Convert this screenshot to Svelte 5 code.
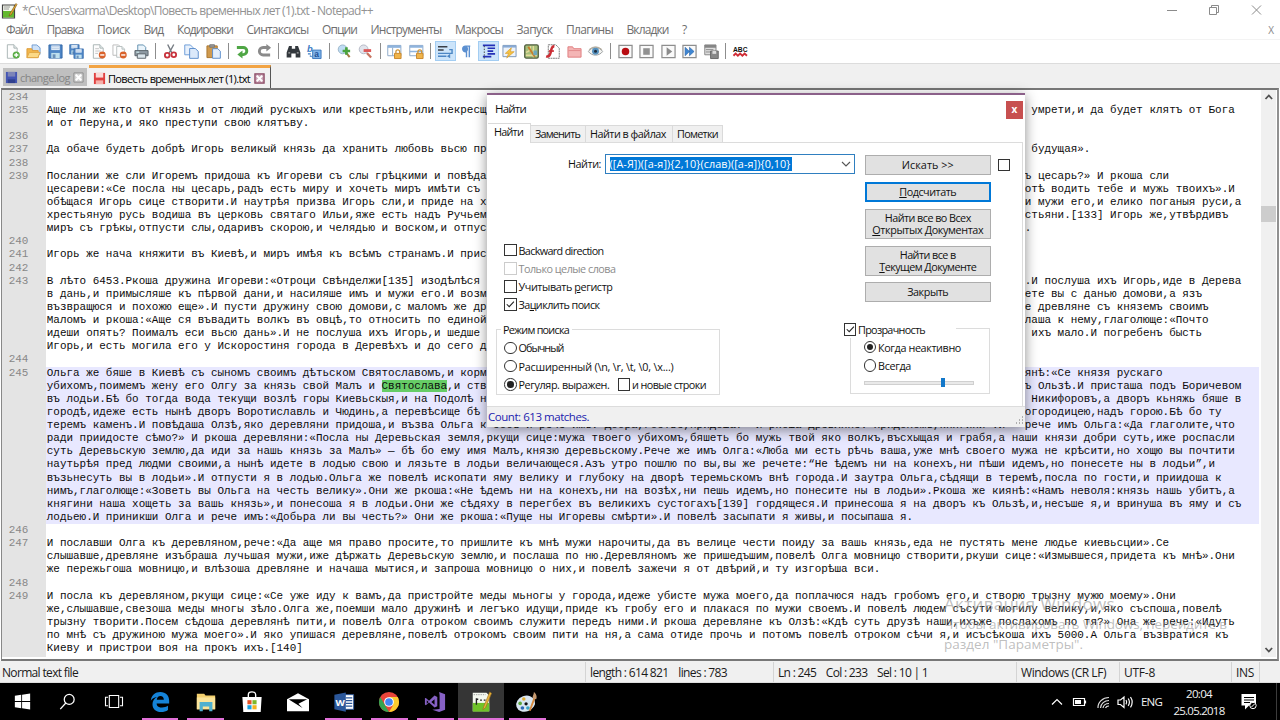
<script>
  // Spreads the letters of a label so that it takes the given width.
  function fit(node, width) {
    const n = [...node.textContent].length;
    const natural = node.getBoundingClientRect().width;
    node.style.letterSpacing = ((width - natural) / n).toFixed(3) + 'px';
  }

  const menu = [
    ['Файл', 27], ['Правка', 37], ['Поиск', 33], ['Вид', 20], ['Кодировки', 56], ['Синтаксисы', 62],
    ['Опции', 35], ['Инструменты', 71], ['Макросы', 48], ['Запуск', 36], ['Плагины', 47], ['Вкладки', 42], ['?', 6]
  ];

  const page = '<path d="M2.5 .8h7l3.5 3.6v10.8H2.5z" fill="#fdfdfd" stroke="#a9b3b3"/><path d="M9.5.8v3.6H13" fill="#e4ecec" stroke="#a9b3b3"/>';
  const minus = '<circle cx="12" cy="11.7" r="3.7" fill="#d9622b"/><path d="M9.8 11.7h4.4" stroke="#fff" stroke-width="1.5"/>';
  const floppy = '<path d="M1 1h14v14H1z" fill="#4f86c6" stroke="#3167a8"/><path d="M3.5 1.5h9v5h-9z" fill="#e9f2fb"/><path d="M3.5 9.5h9V15h-9z" fill="#bfe0ee"/><path d="M4 3h8M4 5h8" stroke="#b7cbe2"/><path d="M5 11h3v4H5z" fill="#6b90b8"/>';
  const lock = '<path d="M8 10h7v5.5H8z" fill="#f0b44a" stroke="#c9862a"/><path d="M9.5 10V8.2a2 2 0 0 1 4 0V10" fill="none" stroke="#cf9436" stroke-width="1.4"/>';
  const frame = (inner) => '<path d="M1 1.5h14v13H1z" fill="#fafafa" stroke="#8e8e8e" stroke-width="1.3"/>' + inner;

  const toolbar = [
    [
      page + '<circle cx="12" cy="11.7" r="3.8" fill="#5cae48"/><path d="M9.8 11.7h4.4M12 9.5v4.4" stroke="#fff" stroke-width="1.4"/>',
      '<path d="M6.5 1h5L15 4v7H6.5z" fill="#cfe2f8" stroke="#6f9bd0"/><path d="M1 5h5l1 2h6v7.5H1z" fill="#f2b64c" stroke="#dc9a36"/><path d="M1 14.5 3.5 9H15l-2.3 5.5z" fill="#fbd987" stroke="#e0a644"/>',
      floppy,
      '<g transform="scale(.72)">' + floppy + '</g><g transform="translate(4.5 4.5) scale(.72)">' + floppy + '</g>',
      page + '<path d="M4.5 5h4M4.5 7.5h6M4.5 10h3" stroke="#c2c2c2"/>' + minus,
      '<path d="M1 1h6l2 2v9H1z" fill="#fff" stroke="#bbb"/><g transform="translate(3 2) scale(.8)">' + page + '</g>' + minus,
      '<path d="M4 7V1h6l2.5 2.5V7" fill="#eaf4fb" stroke="#5f8fae"/><path d="M1 7h14v5.5H1z" fill="#8f9aa3" stroke="#59626a"/><path d="M3.5 10.5h9v4.7h-9z" fill="#dce6ec" stroke="#59626a"/><path d="M2.5 8.7h3" stroke="#dff"/>'
    ],
    [
      '<path d="M5 .5 9.7 10M11.5.5 6.3 10" stroke="#777d84" stroke-width="1.5"/><circle cx="4.5" cy="12" r="2.5" fill="none" stroke="#c8323c" stroke-width="1.9"/><circle cx="11.5" cy="11.5" r="2.5" fill="none" stroke="#c8323c" stroke-width="1.9"/>',
      '<path d="M.8 1h6l3 3v7.5h-9z" fill="#e8f1fc" stroke="#6a9bd8"/><path d="M6 4.8h6l3.2 3v7.5H6z" fill="#dbe9fa" stroke="#5a8ccc"/>',
      '<path d="M1 2h11v12.5H1z" fill="#d09a4e" stroke="#a8742e"/><path d="M4 .8h5v2.6H4z" fill="#999" stroke="#777"/><path d="M7 5h5.5l2.8 2.7v7.5H7z" fill="#e3eefb" stroke="#5a8ccc"/>'
    ],
    [
      '<path d="M2 3.7h6.8a3.7 3.7 0 0 1 0 7.6H7" fill="none" stroke="#4fa645" stroke-width="3.1"/><path d="M8 7v8.5l-5.5-4.2z" fill="#4fa645"/>',
      '<path d="M13 3.7H6.5a3.7 3.7 0 0 0 0 8H14" fill="none" stroke="#8a8a8a" stroke-width="3"/><path d="M10 0v8l5-4z" fill="#8a8a8a"/>'
    ],
    [
      '<path d="M3.2 2h3v3H9.8V2h3l2.5 7v5.5h-5V10H5.7v4.5h-5V9z" fill="#33383d"/><path d="M2.5 9.5h2M11.5 9.5h2" stroke="#aaa" stroke-width="1.4"/>',
      '<text x="0" y="8" font-size="10" font-weight="700" font-style="italic" fill="#3d7cc4" font-family="Liberation Sans">b</text><path d="M6 6.5h9v9H6z" fill="#7db2e8" stroke="#3b76bb"/><text x="7.6" y="14" font-size="9" font-weight="700" fill="#1d4f94" font-family="Liberation Sans">a</text><path d="M1 10.5h3M3 12.5l2 1" stroke="#3d7cc4" stroke-width="1.4"/>'
    ],
    [
      '<circle cx="6" cy="5.7" r="4.7" fill="#bfdcf4" stroke="#9ab4c8"/><path d="m9.5 9 4 5" stroke="#a67c45" stroke-width="2.2"/><path d="M10 3.500v8M6 7.500h8" stroke="#49a33e" stroke-width="2.800"/>',
      '<circle cx="6" cy="5.7" r="4.7" fill="#e1e4ec" stroke="#b3b8c4"/><path d="m9.5 9.5 4.5 5" stroke="#c67460" stroke-width="2.3"/><path d="M6 7h8" stroke="#dc5757" stroke-width="3"/>'
    ],
    [
      '<path d="M.8 1.5h14v11H.8z" fill="#fff" stroke="#8ba6c6"/><path d="M.8 1.5h14v2.6H.8z" fill="#8fb4dd"/><path d="M6 4v8.5" stroke="#8ba6c6"/>' + lock,
      '<path d="M.8 1.5h14v11H.8z" fill="#fff" stroke="#8ba6c6"/><path d="M.8 1.5h14v2.6H.8zM.8 7.2h14v1.5H.8z" fill="#8fb4dd"/>' + lock
    ],
    [
      '<path d="M0 3h10M0 6.5h6" stroke="#3a3f47" stroke-width="1.6"/><path d="M0 10h15V6h-3M0 13h9" stroke="#4c86c4" stroke-width="1.5" fill="none"/><path d="M13 10.5 9.5 13l3.5 2.3z" fill="#4c86c4"/>',
      '<path d="M12 2.3H7a3 3 0 0 0 0 6h1V14M8 2.5V14M11 2.5V14" fill="none" stroke="#5b8fd0" stroke-width="1.5"/><circle cx="6.8" cy="5.3" r="2.8" fill="#5b8fd0"/>',
      '<path d="M2 1.5h13M7 4.5h8M7 7.5h6M7 10.5h8M2 13.5h9" stroke="#2430b8" stroke-width="1.8"/><path d="M3.5 2v14" stroke="#3c3c3c" stroke-dasharray="1.5 1.5"/>',
      '<path d="M1 1.5h14v12H1z" fill="#edf3fb" stroke="#7a94b5"/><path d="M1 1.5h14v2.3H1z" fill="#88a9d4"/><path d="M10 4 3.5 10H7l-2 5 8-6.8H9z" fill="#f5c243" stroke="#d89c2d" stroke-width=".7"/>',
      '<rect x=".8" y="1" width="14.4" height="14" rx="1.5" fill="#a7bf7b" stroke="#4e5c3c" stroke-width="1.4"/><path d="M2 9c4-1 5-5 5-7M2 12h12M10 2v12" stroke="#e5dc9b" stroke-width="1.5" fill="none"/><path d="m4.5 3 7 10.5" stroke="#c77d2b" stroke-width="2"/><path d="M10 7h4v5h-4z" fill="#6ca8bb"/>',
      '<path d="M3.5.8h8l3.7 3.7v10.7H3.5z" fill="#fff" stroke="#777" stroke-dasharray="2 .6"/><path d="M10 2.500C6.500 2.300 7 6 5.800 10c-.9 3-2.300 3.800-4.600 3.200" stroke="#cb2e35" stroke-width="2.600" fill="none"/><path d="M4 7.500h5.500" stroke="#cb2e35" stroke-width="1.800"/>',
      '<path d="M1 3h5l1.2 2H15v9H1z" fill="#f4b5b5" stroke="#df7d7f"/><path d="M1.5 7h13" stroke="#e28a8c"/>',
      '<path d="M.4 8C4 2.5 12 2.5 15.6 8 12 13.2 4 13.2.4 8z" fill="#f1f1ef" stroke="#999d9e"/><circle cx="8" cy="7.8" r="3.7" fill="#5590bd"/><circle cx="8" cy="7.8" r="1.6" fill="#1c2d40"/><path d="M1 6Q8 0 15 6" fill="none" stroke="#aaa18f"/>'
    ],
    [
      frame('<circle cx="8" cy="8" r="4" fill="#b90d12"/>'),
      frame('<path d="M4.5 4.5h7v7h-7z" fill="#919191"/>'),
      frame('<path d="M6 3.5v9l6-4.5z" fill="#8b8b8b"/>'),
      frame('<path d="M3.3 3.5v9L8 8zM8 3.5v9L12.9 8z" fill="#3e86d3" stroke="#285e9e" stroke-width=".6"/>'),
      '<path d="M.8 1h12v10.5h-12z" fill="#ddd" stroke="#858585"/><path d="M.8 1h12v3h-12z" fill="#858585"/><path d="M2 6h8M2 8.5h5" stroke="#888"/><path d="M7 7.5h8.2v8H7z" fill="#888" stroke="#666"/><path d="M9 7.5h4v3H9z" fill="#ddd"/>'
    ],
    [
      '<text x="0" y="8.500" font-size="8" font-weight="700" fill="#111" font-family="Liberation Sans" textLength="15.500" lengthAdjust="spacingAndGlyphs">ABC</text><path d="m.5 12.500 2.300-2.300 2.400 2.300 2.400-2.300 2.400 2.300 2.400-2.300 2.500 2.300" fill="none" stroke="#d02c36" stroke-width="2"/>'
    ]
  ];
  const pressed = ['6-0', '6-2'];

  // Editor rows: [line number, text, text right of the dialog, highlighted]
  const src = [
    ['234', ''],
    ['235', 'Аще ли же кто от князь и от людий рускыхъ или крестьянъ,или некресщ', ' умрети,и да будет клятъ от Бога'],
    ['', 'и от Перуна,и яко преступи свою клятъву.'],
    ['236', ''],
    ['237', 'Да обаче будеть добрѣ Игорь великый князь да хранить любовь вьсю пр', ' будущая».'],
    ['238', ''],
    ['239', 'Послании же сли Игоремъ придоша къ Игореви съ слы грѣцкими и повѣда', 'ъ цесарь?» И ркоша сли'],
    ['', 'цесареви:«Се посла ны цесарь,радъ есть миру и хочеть миръ имѣти съ ', 'отѣ водить тебе и мужь твоихъ».И'],
    ['', 'обѣщася Игорь сице створити.И наутрѣя призва Игорь сли,и приде на х', 'и мужи его,и елико поганыя руси,а'],
    ['', 'хрестьяную русь водиша въ церковь святаго Ильи,яже есть надъ Ручьем', 'стьяни.[133] Игорь же,утвѣрдивъ'],
    ['', 'миръ съ грѣкы,отпусти слы,одаривъ скорою,и челядью и воском,и отпус', '.'],
    ['240', ''],
    ['241', 'Игорь же нача княжити въ Киевѣ,и миръ имѣя къ всѣмъ странамъ.И прис'],
    ['242', ''],
    ['243', 'В лѣто 6453.Ркоша дружина Игореви:«Отроци Свѣнделжи[135] изодѣлѣся ', '.И послуша ихъ Игорь,иде в Дерева'],
    ['', 'в дань,и примысляше къ пѣрвой дани,и насиляше имъ и мужи его.И возм', 'ете вы с данью домови,а язъ'],
    ['', 'възвращюся и похожю еще».И пусти дружину свою домови,с маломъ же др', 'е древляне съ княземъ своимъ'],
    ['', 'Маломъ и ркоша:«Аще ся въвадить волкъ въ овцѣ,то относить по единой', 'лаша к нему,глаголюще:«Почто'],
    ['', 'идеши опять? Поималъ еси вьсю дань».И не послуша ихъ Игорь,и шедше ', ' ихъ мало.И погребенъ бысть'],
    ['', 'Игорь,и есть могила его у Искоростиня города в Деревѣхъ и до сего д'],
    ['244', ''],
    ['245', 'Ольга же бяше в Киевѣ съ сыномъ своимъ дѣтьском Святославомъ,и корм', 'янѣ:«Се князя рускаго', 1],
    ['', 'убихомъ,поимемъ жену его Олгу за князь свой Малъ и Святослава,и ств', 'ъ Ользѣ.И присташа подъ Боричевом', 1],
    ['', 'въ лодьи.Бѣ бо тогда вода текущи возлѣ горы Киевьскыя,и на Подолѣ н', ' Никифоровъ,а дворъ кьняжь бяше в', 1],
    ['', 'городѣ,идеже есть нынѣ дворъ Воротиславль и Чюдинь,а перевѣсище бѣ ', 'огородицею,надъ горою.Бѣ бо ту', 1],
    ['', 'теремъ каменъ.И повѣдаша Олзѣ,яко деревляни придоша,и възва Ольга к собѣ и рече имъ:«Добра,гостье,придоша?» И ркоша древляне:«Придохомъ,княгини».И', 'рече имъ Ольга:«Да глаголите,что', 1],
    ['', 'ради приидосте сѣмо?» И ркоша деревляни:«Посла ны Деревьская земля,ркущи сице:мужа твоего убихомъ,бяшеть бо мужь твой яко волкъ,въсхыщая и грабя,а наши князи добри суть,иже роспасли', '', 1],
    ['', 'суть Деревьскую землю,да иди за нашь князь за Малъ» — бѣ бо ему имя Малъ,князю деревьскому.Рече же имъ Олга:«Люба ми есть рѣчь ваша,уже мнѣ своего мужа не крѣсити,но хощю вы почтити', '', 1],
    ['', 'наутьрѣя пред людми своими,а нынѣ идете в лодью свою и лязьте в лодьи величающеся.Азъ утро пошлю по вы,вы же речете:“Не ѣдемъ ни на конехъ,ни пѣши идемъ,но понесете ны в лодьи”,и', '', 1],
    ['', 'възьнесуть вы в лодьи».И отпусти я в лодью.Ольга же повелѣ ископати яму велику и глубоку на дворѣ теремьскомъ внѣ города.И заутра Ольга,сѣдящи в теремѣ,посла по гости,и приидоша к', '', 1],
    ['', 'нимъ,глаголюще:«Зоветь вы Ольга на честь велику».Они же ркоша:«Не ѣдемъ ни на конехъ,ни на возѣх,ни пешь идемъ,но понесите ны в лодьи».Ркоша же киянѣ:«Намъ неволя:князь нашь убитъ,а', '', 1],
    ['', 'княгини наша хощеть за вашь князь»,и понесоша я в лодьи.Они же сѣдяху в перегбех въ великихъ сустогахъ[139] гордящеся.И принесоша я на дворъ къ Ользѣ,и,несъше я,и вринуша въ яму и съ', '', 1],
    ['', 'лодьею.И приникши Олга и рече имъ:«Добьра ли вы честь?» Они же ркоша:«Пуще ны Игоревы смѣрти».И повелѣ засыпати я живы,и посыпаша я.', '', 1],
    ['246', ''],
    ['247', 'И пославши Олга къ деревляном,рече:«Да аще мя право просите,то пришлите къ мнѣ мужи нарочиты,да въ велице чести поиду за вашь князь,еда не пустять мене людье киевьсции».Се'],
    ['', 'слышавше,древляне изъбраша лучьшая мужи,иже дѣржать Деревьскую землю,и послаша по ню.Деревляномъ же пришедъшим,повелѣ Олга мовницю створити,ркуши сице:«Измывшеся,придета къ мнѣ».Они'],
    ['', 'же пережьгоша мовницю,и влѣзоша древляне и начаша мытися,и запроша мовницю о них,и повелѣ зажечи я от двѣрий,и ту изгорѣша вси.'],
    ['248', ''],
    ['249', 'И посла къ деревляном,ркущи сице:«Се уже иду к вамъ,да пристройте меды мьногы у города,идеже убисте мужа моего,да поплачюся надъ гробомъ его,и створю трызну мужю моему».Они'],
    ['', 'же,слышавше,свезоша меды многы зѣло.Олга же,поемши мало дружинѣ и легъко идущи,приде къ гробу его и плакася по мужи своемъ.И повелѣ людем съсути могилу велику,и,яко съспоша,повелѣ'],
    ['', 'трызну творити.Посем сѣдоша деревлянѣ пити,и повелѣ Олга отроком своимъ служити передъ ними.И ркоша деревляне къ Олзѣ:«Кдѣ суть друзѣ наши,ихъже послахомъ по тя?» Она же рече:«Идуть'],
    ['', 'по мнѣ съ дружиною мужа моего».И яко упишася деревляне,повелѣ отрокомъ своим пити на ня,а сама отиде прочь и потомъ повелѣ отроком сѣчи я,и исъсѣкоша ихъ 5000.А Ольга възвратися къ'],
    ['', 'Киеву и пристрои воя на прокъ ихъ.[140]']
  ];
  const MATCH = 'Святослава,';
  const rows = src.map(([num, left, right, current]) => {
    const at = left.indexOf(MATCH);
    const end = at + MATCH.length - 1;
    return { num, current, right, parts: at < 0 ? [left, '', ''] : [left.slice(0, at), left.slice(at, end), left.slice(end)] };
  });

  const regex = '([А-Я])([а-я]){2,10}(слав)([а-я]){0,10}';

  const apps = [
    ['edge', true, '<path d="M2 10.5C2.5 4.5 7 1 12.3 1 18.5 1 22 5 22 10.5v3H8.3c.2 3.3 3 4.5 6 4.5 2.400 0 4.500-.6 6.400-1.800v4.600C18.600 22.300 16 23 13.200 23 7.500 23 3.800 19.700 3.800 14.500c0-3.700 1.900-6.400 4.900-8C5.500 6.800 3.300 8.300 2 10.500zM8.500 9.600h7.700c0-2.600-1.400-4.100-3.700-4.100S8.700 7.300 8.500 9.600z" fill="#1583d8"/>'],
    ['files', true, '<path d="M2 3h8l1.500 2H22v15H2z" fill="#f3cf6d"/><path d="M2 7h20v13H2z" fill="#fbe49a"/><path d="M5 12h14v10h-3.500v-5h-7v5H5z" fill="#4fb0cf"/>'],
    ['store', false, '<path d="M1.500 6.500h21L21.500 23h-19z" fill="#fff"/><path d="M8 7V4a4 3 0 0 1 8 0v3" fill="none" stroke="#fff" stroke-width="1.500"/><path d="M7 10h4.500v4.500H7z" fill="#e65124"/><path d="M12.500 10H17v4.500h-4.500z" fill="#7db829"/><path d="M7 15.500h4.500V20H7z" fill="#18a0e0"/><path d="M12.500 15.500H17V20h-4.500z" fill="#f4b31d"/>'],
    ['mail', false, '<path d="m0 9 12-6.500L24 9v13H0z" fill="#fff"/><path d="M2.500 9h19.500L12.500 14l4.500 4.500L2.500 9.500z" fill="#000"/>'],
    ['word', true, '<path d="M12 4h10.500v16H12z" fill="#fff" stroke="#2b579a"/><path d="M14 7.500h7M14 10.500h7M14 13.500h7M14 16.500h7" stroke="#2b579a" stroke-width="1.200"/><path d="M1.500 4 14 1.500v21L1.500 20z" fill="#2b579a"/><text x="2.800" y="16" font-family="Open Sans" font-weight="700" font-size="10.500" fill="#fff">W</text>'],
    ['chrome', true, '<circle cx="12" cy="12" r="11" fill="#e8443a"/><path d="M2.500 6.500 8 16l4 7A11 11 0 0 1 2.500 6.500z" fill="#33a350"/><path d="M21.500 6.500H12l4.500 9L12 23A11 11 0 0 0 21.500 6.500z" fill="#fccb2e"/><circle cx="12" cy="12" r="5.300" fill="#fff"/><circle cx="12" cy="12" r="4.200" fill="#4285f4"/>'],
    ['vs', true, '<path d="M16.500 1 23 3.500v17L16.500 23 9 20.500l8-1V4.500z" fill="#8661c5"/><path d="m2 7.500 3.500 3 6-5.500 3 1.500v10l-3 1.500-6-5.500-3.500 3-1-.7V8zM11.500 9l-3.500 3 3.500 3zM3 10v4l2-2z" fill="#8661c5" fill-rule="evenodd"/>'],
    ['npp', true, '<path d="M3 2h15l3 3v17H3z" fill="#f4f8ef"/><path d="M3 13h18v9.500H3z" fill="#6fc329"/><path d="M4 4h13" stroke="#999" stroke-dasharray="1.500 1"/><path d="M7 8v7M7 9h2M11 10h2M15 10h2" stroke="#222" stroke-width="1.500"/><path d="M21.500 1 15 17l-1 3.500L17 18 23.500 2.500z" fill="#e9b33b" stroke="#9a6d1d" stroke-width=".7"/>', true],
    ['paint', true, '<ellipse cx="10.500" cy="14" rx="10.500" ry="8.500" transform="rotate(-20 10 14)" fill="#d8e6f2"/><circle cx="4.500" cy="13.500" r="2" fill="#5ba53c"/><circle cx="8.500" cy="8.800" r="1.900" fill="#e2ae35"/><circle cx="7" cy="18.500" r="2" fill="#2d67b5"/><circle cx="13" cy="18.500" r="2" fill="#3ba7c9"/><circle cx="11" cy="14" r="1.800" fill="#111"/><path d="M20 8 15 21.500" stroke="#d98a3d" stroke-width="2"/><path d="M18.500 8.500c-1-3 1-4 1-7.500 2 1.500 4 4.500 2.500 8z" fill="#c69a70"/>']
  ];
</script>

{#snippet svg(body, cls, vb = '0 0 16 16')}
  <svg class={cls} viewBox={vb}>{@html body}</svg>
{/snippet}
{#snippet check(on, off)}
  <span class="box" class:off>{#if on}<svg viewBox="0 0 12 12"><path d="m2 6 2.800 2.800L10.200 3" fill="none" stroke="#222" stroke-width="1.200" /></svg>{/if}</span>
{/snippet}
{#snippet radio(on)}
  <span class="radio">{#if on}<i></i>{/if}</span>
{/snippet}

<div class="screen">
  <header class="title">
    <svg class="logo" viewBox="0 0 16 16"><path d="M1.500 2h12v13h-12z" fill="#f5f9ed" stroke="#444" stroke-width="1.200" /><path d="M2 8h11v6.500H2z" fill="#64b92f" /><path d="M3 4h6M3 6h5" stroke="#999" /><path d="M15 .5 9 10.500l-1 2.500 2.500-1.500L16 1.500z" fill="#e9ad2e" stroke="#76511b" stroke-width=".6" /></svg>
    <span class="caption" use:fit={351}>*C:\Users\xarma\Desktop\Повесть временных лет (1).txt - Notepad++</span>
    <svg class="winbtns" viewBox="0 0 110 20"><path d="M6 9.500h10M48.500 6.500h7v7h-7zM50.500 6V4.500h7v7H56M91 4.500l9 9M100 4.500l-9 9" fill="none" stroke="#8b8b8b" /></svg>
  </header>
  <nav class="menu">
    {#each menu as [name, w]}<span style="width:{w}px"><b use:fit={w}>{name}</b></span>{/each}
    <em>X</em>
  </nav>
  <div class="toolbar">
    {#each toolbar as group, g}
      {#if g}<i class="sep"></i>{/if}
      {#each group as icon, n}
        <span class="tool" class:pressed={pressed.includes(g + '-' + n)}>{@render svg(icon, 'ico')}</span>
      {/each}
    {/each}
  </div>
  <div class="tabs">
    <div class="tab idle">
      <svg viewBox="0 0 14 14"><path d="M1 1h12v12H1z" fill="#4455b4" /><path d="M3 1h8v5H3z" fill="#7c84b8" /><path d="M3 9h8v4H3z" fill="#30408e" /></svg>
      <span use:fit={50}>change.log</span>
      <svg class="x" viewBox="0 0 12 12"><path d="M1 1h10v10H1z" fill="#d5d5d5" stroke="#8b8b8b" /><path d="m3 3 6 6M9 3 3 9" stroke="#fff" stroke-width="2" /></svg>
    </div>
    <div class="tab active">
      <svg viewBox="0 0 14 14"><path d="M1 1h12v12H1z" fill="#e0403f" /><path d="M3 1h8v5H3z" fill="#fbd9d6" /><path d="M3 9h8v4H3z" fill="#f4b0aa" /></svg>
      <span use:fit={142}>Повесть временных лет (1).txt</span>
      <svg class="x" viewBox="0 0 12 12"><path d="M1 1h10v10H1z" fill="#c9a3b4" stroke="#8b4863" stroke-width="1.400" /><path d="m3 3 6 6M9 3 3 9" stroke="#fff" stroke-width="2" /></svg>
    </div>
  </div>

  <main class="editor">
    <div class="rows">
      {#each rows as row}
        <div class="row">
          <span class="num">{row.num}</span>
          <div class="code" class:current={row.current}><span class="run" class:short={row.right}>{row.parts[0]}<mark>{row.parts[1]}</mark>{row.parts[2]}</span>{#if row.right}<span>{row.right}</span>{/if}</div>
        </div>
      {/each}
    </div>
    <div class="scroll">
      <svg viewBox="0 0 15 15"><path d="m4.500 9 3.300-3.500L11.100 9" fill="none" stroke="#505050" stroke-width="1.800" /></svg>
      <i></i>
      <svg viewBox="0 0 15 15"><path d="m4.500 6 3.300 3.500L11.100 6" fill="none" stroke="#505050" stroke-width="1.800" /></svg>
    </div>
  </main>

  <footer class="status">
    <span style="width:584px"><b use:fit={76}>Normal text file</b></span>
    <span style="width:188px"><b use:fit={137}>length : 614 821 &nbsp;&nbsp; lines : 783</b></span>
    <span style="width:243px"><b use:fit={150}>Ln : 245 &nbsp;&nbsp; Col : 233 &nbsp;&nbsp; Sel : 10 | 1</b></span>
    <span style="width:103px"><b use:fit={85}>Windows (CR LF)</b></span>
    <span style="width:112px"><b use:fit={31}>UTF-8</b></span>
    <span style="width:28px"><b use:fit={18}>INS</b></span>
  </footer>

  <div class="taskbar">
    <div class="sys">{@render svg('<path d="M1 3.300 8.500 2.200v7.300H1zM9.500 2 19 .7v8.800H9.500zM1 10.500h7.500v7.300L1 16.700zM9.500 10.500H19v8.800L9.500 18z" fill="#fff"/>', 'i16', '0 0 20 20')}</div>
    <div class="sys">{@render svg('<circle cx="12" cy="7.500" r="5.800" fill="none" stroke="#fff" stroke-width="1.500"/><path d="M8 11.800 1.500 19" stroke="#fff" stroke-width="1.500"/>', 'i17', '0 0 20 20')}</div>
    <div class="sys">{@render svg('<path d="M5.500 3h11v14h-11zM4 5H1v10h3M18 5h3v10h-3" fill="none" stroke="#fff" stroke-width="1.300"/>', 'i20', '0 0 22 20')}</div>
    {#each apps as [name, open, icon, active]}
      <div class="app {name}" class:open class:front={active}>{@render svg(icon, 'appico', '0 0 24 24')}</div>
    {/each}
    <div class="tray">
      <svg class="glyphs" viewBox="0 0 84 20"><g fill="none" stroke="#fff" stroke-width="1.200"><path d="m1 12.500 5-5 5 5" /><path d="M22.500 6.500h11v7h-11zM34.500 8.500v3" /><path d="M47 16a11 10 0 0 1 11-10.500M49.500 16a8.500 8 0 0 1 8.500-7.500M52 16a6 5 0 0 1 6-4.500M54.500 16a3.500 3 0 0 1 3.500-2" stroke="#ddd" /><path d="M67 8h2.500L73 5v10.500L69.500 12.500H67zM75 8q1.500 2.200 0 4.400M77.200 6.500q2.500 3.700 0 7.400M79.500 5q3.400 5.200 0 10.400" /></g><path d="M24 8h6v4h-6z" fill="#fff" /></svg>
      <span class="lang"><b use:fit={21}>ENG</b></span>
      <div class="clock"><b use:fit={26}>20:04</b><b use:fit={51}>25.05.2018</b></div>
      <svg class="note" viewBox="0 0 18 20"><path d="M1.500 2h14.500v11.500h-7L5 17.500v-4H1.500z" fill="#fff" /><path d="M4 5.500h10M4 8h10M4 10.500h6" stroke="#000" stroke-width="1.200" /><circle cx="13" cy="13.500" r="3.200" fill="#000" stroke="#fff" /><path d="m11.500 15 3-3" stroke="#fff" /></svg>
      <i class="peek"></i>
    </div>
  </div>

  <div class="mark">
    <p class="big"><span use:fit={171}>Активация Windows</span></p>
    <p><span use:fit={283}>Чтобы активировать Windows, перейдите в</span></p>
    <p><span use:fit={139}>раздел "Параметры".</span></p>
  </div>

  <section class="dialog">
    <div class="dtitle"><span use:fit={31}>Найти</span><i class="close">x</i></div>
    <div class="dtabs">
      <span class="on" style="width:43px"><b use:fit={29}>Найти</b></span>
      <span style="width:55px"><b use:fit={45}>Заменить</b></span>
      <span style="width:87px"><b use:fit={76}>Найти в файлах</b></span>
      <span style="width:50px"><b use:fit={41}>Пометки</b></span>
    </div>
    <div class="body">
      <div class="left">
        <div class="find">
          <label><b use:fit={33}>Найти:</b></label>
          <div class="combo"><span class="sel"><b use:fit={181}>{regex}</b></span><svg viewBox="0 0 10 10"><path d="m1 3 4 4 4-4" fill="none" stroke="#555" stroke-width="1.100" /></svg></div>
        </div>
        <div class="opts">
          <div>{@render check(false, false)}<b use:fit={85}>Backward direction</b></div>
          <div class="dim">{@render check(false, true)}<b use:fit={97}>Только целые слова</b></div>
          <div>{@render check(false, false)}<b use:fit={94}>Учитывать <u>р</u>егистр</b></div>
          <div>{@render check(true, false)}<b use:fit={81}>За<u>ц</u>иклить поиск</b></div>
        </div>
        <div class="group mode">
          <span class="legend"><b use:fit={66}>Режим поиска</b></span>
          <div>{@render radio(false)}<b use:fit={45}>Обычный</b></div>
          <div>{@render radio(false)}<b use:fit={155}>Расширенный (\n, \r, \t, \0, \x...)</b></div>
          <div>{@render radio(true)}<b use:fit={91}>Регуляр. выражен.</b><span class="nl">{@render check(false, false)}<b use:fit={74}>и новые строки</b></span></div>
        </div>
      </div>
      <div class="right">
        <div class="btnrow"><button><b use:fit={52}>Искать &gt;&gt;</b></button>{@render check(false, false)}</div>
        <button class="default"><b use:fit={57}><u>П</u>одсчитать</b></button>
        <button class="tall"><b use:fit={86}>Найти все во Всех</b><b use:fit={111}><u>О</u>ткрытых Документах</b></button>
        <button class="tall"><b use:fit={56}>Найти все в</b><b use:fit={97}><u>Т</u>екущем Документе</b></button>
        <button><b use:fit={41}>Закрыть</b></button>
        <div class="group alpha">
          <span class="legend">{@render check(true, false)}<b use:fit={67}>Прозрачность</b></span>
          <div>{@render radio(true)}<b use:fit={83}>Когда неактивно</b></div>
          <div>{@render radio(false)}<b use:fit={33}>Всегда</b></div>
          <div class="slider"><i></i></div>
        </div>
      </div>
    </div>
    <div class="dstatus"><b use:fit={101}>Count: 613 matches.</b><svg viewBox="0 0 9 9"><path d="M7 1h1M7 4h1M4 4h1M7 7h1M4 7h1M1 7h1" stroke="#999" stroke-width="1.300" /></svg></div>
  </section>
</div>

<style>
  :global(body) { margin: 0; overflow: hidden; background: #000; }
  .screen { position: relative; width: 1280px; height: 720px; overflow: hidden; display: flex; flex-direction: column; background: #fff; font-family: "Open Sans", "Noto Sans", sans-serif; font-size: 12px; color: #1a1a1a; }
  .screen * { box-sizing: border-box; }
  b { font-weight: 400; white-space: nowrap; display: inline-block; }
  svg { display: block; flex: none; overflow: visible; }
  u { text-decoration: underline; text-underline-offset: 1px; }

  .title { height: 21px; display: flex; align-items: center; padding-left: 1px; }
  .logo { width: 16px; height: 16px; margin-right: 5px; }
  .caption { color: #929292; white-space: nowrap; line-height: 20px; }
  .winbtns { width: 110px; height: 20px; margin-left: auto; margin-right: 9px; }
  .menu { height: 18px; display: flex; align-items: center; gap: 13.500px; padding: 0 6px; color: #6e6e6e; line-height: 18px; }
  .menu em { margin-left: auto; font-style: normal; font-size: 10px; color: #888; }
  .toolbar { height: 24px; display: flex; align-items: center; padding: 0 0 1px 1.500px; background: #fff; border-top: 1px solid #f3f3f3; }
  .tool { width: 21.500px; height: 20px; display: grid; place-items: center; flex: none; }
  .tool.pressed { background: #cce4fa; box-shadow: inset 0 0 0 1px #a3cdf2; }
  .ico { width: 15px; height: 15px; }
  .sep { width: 1px; height: 16px; margin: 0 3.350px; background: #8d8d8d; }
  .tabs { height: 25px; display: flex; align-items: flex-end; padding-left: 3px; background: #f0f0f0; border-top: 1px solid #dcdcdc; font-size: 11px; }
  .tab { display: flex; align-items: center; white-space: nowrap; }
  .tab svg { width: 13px; height: 13px; }
  .tab .x { width: 11px; height: 11px; margin-left: auto; }
  .idle { width: 84px; height: 18px; margin-bottom: 2px; background: #bfbfbf; color: #858585; padding: 0 3px 0 2px; }
  .idle span { margin-left: 2px; }
  .active { width: 182px; height: 23px; margin-left: 2px; background: #f2f2f2; border-top: 3.500px solid #f2a444; border-right: 1.500px solid #555; color: #000; padding: 0 5px 0 4px; }
  .active span { margin-left: 2px; }

  .editor { height: 573px; display: flex; border: 1px solid #888; border-top: 2px solid #777; border-bottom: 2px solid #777; border-right: 2px solid #909090; margin: 0 1px; background: #fff; }
  .rows { width: 1259px; height: 567px; overflow: hidden; font-family: "Liberation Mono", monospace; font-size: 10.945px; line-height: 13.130px; background: linear-gradient(90deg, #e4e4e4 44px, #fff 44px); padding-top: .9px; }
  .row { display: flex; height: 13.130px; padding-right: 2px; }
  .num { width: 44px; padding-left: 6.700px; color: #888; flex: none; }
  .code { white-space: pre; flex: 1; height: 13.130px; color: #0c0c0c; padding-left: .8px; display: flex; }
  .run { flex: none; }
  .short { width: 149ch; padding-right: 80ch; }
  .short:has(mark:empty) { padding-right: 0; }
  .short { padding-right: 0; }
  .current { background: #e8e8ff; }
  mark { background: #66cc66; color: inherit; }
  .scroll { width: 15px; height: 567px; background: #f0f0f0; display: flex; flex-direction: column; }
  .scroll svg { width: 15px; height: 15px; }
  .scroll i { height: 16px; margin-top: 101px; margin-bottom: auto; background: #cdcdcd; }

  .status { height: 22px; display: flex; align-items: center; background: #f0f0f0; padding-left: 2px; border-bottom: 1px solid #ddd; font-size: 12px; }
  .status span { border-right: 1px solid #d4d4d4; height: 20px; line-height: 21px; flex: none; }
  .status span + span { padding-left: 4px; }

  .taskbar { height: 37px; background: #000; display: flex; align-items: center; color: #f2f2f2; }
  .sys { width: 45px; display: grid; place-items: center; flex: none; }
  .sys:nth-child(3) { width: 47px; }
  .i16 { width: 17px; height: 17px; }
  .i17 { width: 17px; height: 17px; }
  .i20 { width: 20px; height: 17px; }
  .app { width: 45.900px; height: 37px; flex: none; display: grid; place-items: center; position: relative; }
  .appico { width: 22px; height: 22px; }
  .open::after { content: ""; position: absolute; left: 4.500px; right: 4.500px; bottom: 0; height: 2px; background: #e170d8; }
  .front { background: #353535; }
  .front::after { left: 0; right: 0; }
  .tray { margin-left: auto; display: flex; align-items: center; padding-right: 3px; height: 37px; }
  .glyphs { width: 84px; height: 20px; margin-right: 6px; }
  .lang { width: 21px; font-size: 11.500px; }
  .clock { width: 52px; margin-left: 11px; display: flex; flex-direction: column; align-items: center; font-size: 11.500px; line-height: 17px; }
  .note { width: 18px; height: 20px; margin-left: 15px; margin-right: 18px; }
  .peek { width: 1px; height: 37px; background: #3c3c3c; }

  .mark { position: absolute; left: 944px; top: 592px; color: rgba(150, 150, 150, .62); font-size: 13.500px; line-height: 19.500px; }
  .mark p { margin: 0; white-space: nowrap; }
  .mark .big { font-size: 17px; line-height: 23px; }

  .dialog { position: absolute; left: 487px; top: 93px; width: 538px; height: 334px; background: #fff; border-top: 2px solid #8b6089; box-shadow: 0 3px 12px rgba(0, 0, 0, .45); display: flex; flex-direction: column; font-size: 10.800px; color: #111; padding-left: 1px; }
  .dtitle { height: 28px; display: flex; align-items: center; padding: 0 2px 2px 7px; font-size: 11.500px; }
  .close { width: 17px; height: 18px; margin-left: auto; margin-top: 4px; background: #c75050; color: #fff; display: grid; place-items: center; font: 700 10px/1 "Open Sans", sans-serif; padding-bottom: 2px; }
  .dtabs { height: 19px; display: flex; align-items: flex-end; }
  .dtabs span { height: 17px; background: #f0f0f0; border: 1px solid #dadada; border-left: 0; border-bottom: 0; line-height: 16px; padding-left: 4px; flex: none; }
  .dtabs .on { height: 20px; background: #fff; padding-left: 6px; position: relative; margin-bottom: -1px; }
  .body { height: 264px; display: flex; border-top: 1px solid #dcdcdc; border-right: 1px solid #dcdcdc; margin-right: 2px; }
  .left { width: 366.500px; flex: none; }
  .find { display: flex; height: 19px; margin-top: 11px; align-items: center; }
  .find label { width: 116.500px; padding-left: 80px; line-height: 18px; flex: none; }
  .combo { width: 250px; height: 20px; border: 1.500px solid #2f7fc0; display: flex; align-items: center; justify-content: space-between; padding: 0 3px 0 4px; }
  .sel { background: #0078d7; color: #fff; height: 14px; line-height: 13px; width: 182px; white-space: nowrap; }
  .combo svg { width: 10px; height: 10px; }
  .opts { margin: 68px 0 0 16px; }
  .opts > div { display: flex; align-items: center; height: 18.200px; }
  .box { width: 12.500px; height: 12.500px; border: 1.300px solid #333; display: inline-block; margin-right: 2px; background: #fff; flex: none; }
  .box svg { width: 100%; height: 100%; }
  .box.off { border-color: #ccc; }
  .dim { color: #8c8c8c; }
  .group { border: 1px solid #dcdcdc; position: relative; }
  .group > div { display: flex; align-items: center; height: 18.300px; white-space: nowrap; }
  .legend { position: absolute; top: -9px; background: #fff; line-height: 17px; display: flex; align-items: center; white-space: nowrap; }
  .mode { width: 224px; height: 66px; margin: 15px 0 0 8px; padding: 9px 0 0 7px; }
  .mode .legend { left: 4px; padding: 0 3px 0 2px; }
  .nl { display: flex; align-items: center; margin-left: 8px; }
  .radio { width: 12.500px; height: 12.500px; border: 1.200px solid #333; border-radius: 50%; display: grid; place-items: center; margin-right: 2px; background: #fff; flex: none; }
  .radio i { width: 6.500px; height: 6.500px; border-radius: 50%; background: #222; }
  .right { flex: 1; padding: 12px 0 0 10px; display: flex; flex-direction: column; align-items: flex-start; }
  .btnrow { display: flex; align-items: center; gap: 6.500px; }
  button { width: 126.500px; height: 20px; padding: 0; border: 1px solid #adadad; background: #e1e1e1; font: inherit; line-height: 12.300px; color: #111; display: flex; flex-direction: column; align-items: center; justify-content: center; flex: none; }
  .default { margin-top: 7px; border: 2px solid #0078d7; }
  .tall { height: 30px; margin-top: 7px; }
  .tall + button:not(.tall) { margin-top: 6px; }
  .alpha { width: 140px; height: 66px; margin: 26px 0 0 -15px; padding: 9px 0 0 13px; }
  .alpha .legend { left: -7px; top: -8px; padding-right: 31px; }
  .slider { width: 110px; height: 4px !important; margin: 6px 0 0 .5px; border: 1px solid #d0d0d0; background: #e9e9e9; }
  .slider i { width: 4px; height: 9px; background: #1277c9; margin-left: 76px; flex: none; }
  .dstatus { height: 21px; background: #f0f0f0; border-top: 1px solid #dcdcdc; display: flex; align-items: center; justify-content: space-between; color: #1c1cae; font-size: 11.500px; margin-left: -1px; padding: 0 0 1px 1px; }
  .dstatus svg { width: 9px; height: 9px; align-self: flex-end; margin: 0 1px 1px 0; }
</style>
